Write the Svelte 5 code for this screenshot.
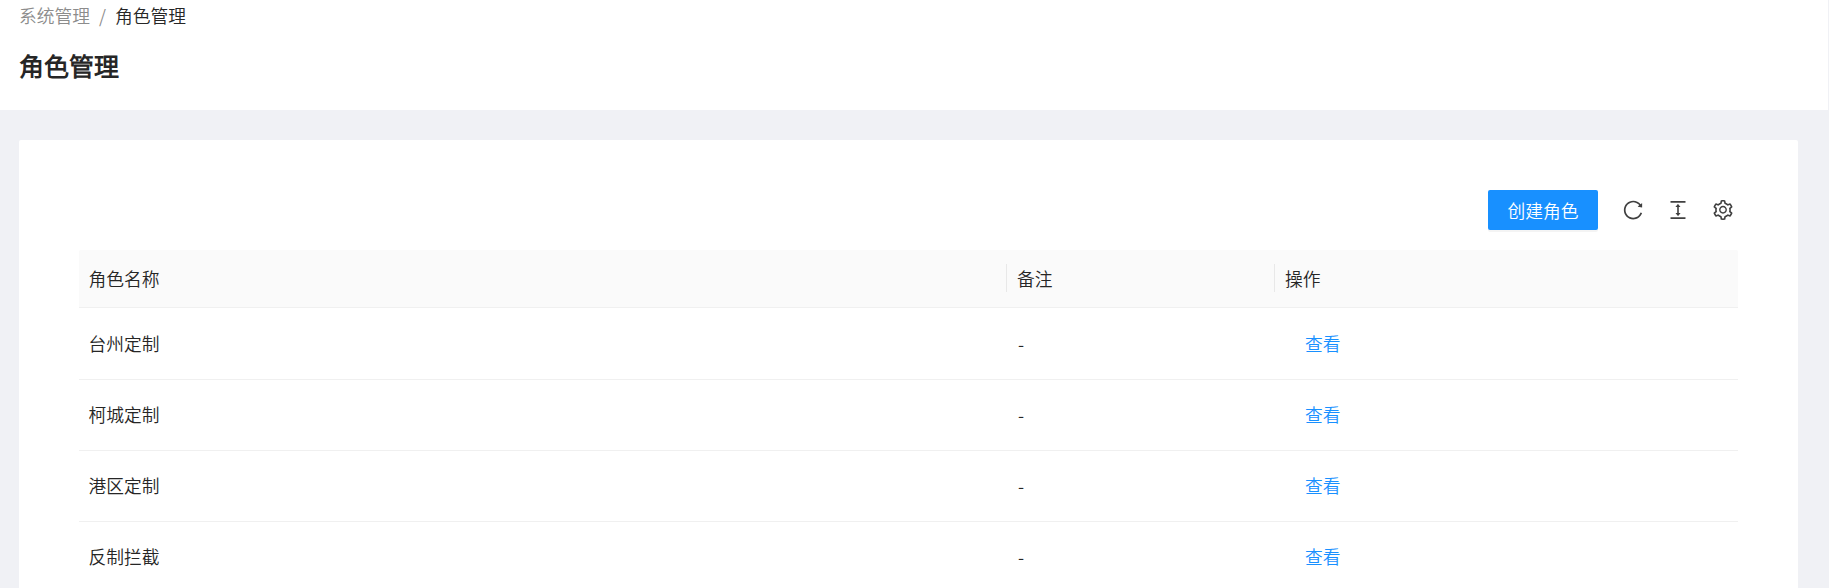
<script>
  const rows = ['台州定制', '柯城定制', '港区定制', '反制拦截'];
  const icons = [
    {
      label: '刷新',
      d: 'M909.1 209.3l-56.4 44.1C775.8 155.1 656.2 92 521.9 92 290 92 102.3 279.5 102 511.5 101.7 743.7 289.8 932 521.9 932c181.3 0 335.8-115 394.6-276.1 1.5-4.2-.7-8.9-4.9-10.3l-56.7-19.5a8 8 0 00-10.1 4.8c-1.8 5-3.8 10-5.9 14.9-17.3 41-42.1 77.8-73.7 109.4A344.77 344.77 0 01655.9 829c-42.3 17.9-87.4 27-133.8 27-46.5 0-91.5-9.1-133.8-27A341.5 341.5 0 01279 755.2a342.16 342.16 0 01-73.7-109.4c-17.9-42.4-27-87.4-27-133.9s9.1-91.5 27-133.9c17.3-41 42.1-77.8 73.7-109.4 31.6-31.6 68.4-56.4 109.3-73.8 42.3-17.9 87.4-27 133.8-27 46.5 0 91.5 9.1 133.8 27a341.5 341.5 0 01109.3 73.8c9.9 9.9 19.2 20.4 27.8 31.4l-60.2 47a8 8 0 003 14.1l175.6 43c5 1.2 9.9-2.6 9.9-7.7l.8-180.9c-.1-6.6-7.8-10.3-13-6.2z'
    },
    {
      label: '密度',
      d: 'M840 836H184c-4.4 0-8 3.6-8 8v60c0 4.4 3.6 8 8 8h656c4.4 0 8-3.6 8-8v-60c0-4.4-3.6-8-8-8zm0-724H184c-4.4 0-8 3.6-8 8v60c0 4.4 3.6 8 8 8h656c4.4 0 8-3.6 8-8v-60c0-4.4-3.6-8-8-8zM610.8 378c6 0 9.4-7 5.7-11.7L515.7 238.7a7.14 7.14 0 00-11.3 0L403.6 366.3a7.23 7.23 0 005.7 11.7H476v268h-62.8c-6 0-9.4 7-5.7 11.7l100.8 127.5c2.9 3.7 8.5 3.7 11.3 0l100.8-127.5c3.7-4.7.4-11.7-5.7-11.7H548V378h62.8z'
    },
    {
      label: '列设置',
      d: 'M924.8 625.7l-65.5-56c3.1-19 4.7-38.4 4.7-57.8s-1.6-38.8-4.7-57.8l65.5-56a32.03 32.03 0 009.3-35.2l-.9-2.6a443.74 443.74 0 00-79.7-137.9l-1.8-2.1a32.12 32.12 0 00-35.1-9.5l-81.3 28.9c-30-24.6-63.5-44-99.7-57.6l-15.7-85a32.05 32.05 0 00-25.8-25.7l-2.7-.5c-52.1-9.4-106.9-9.4-159 0l-2.7.5a32.05 32.05 0 00-25.8 25.7l-15.8 85.4a351.86 351.86 0 00-99 57.4l-81.9-29.1a32 32 0 00-35.1 9.5l-1.8 2.1a446.02 446.02 0 00-79.7 137.9l-.9 2.6c-4.5 12.5-.8 26.5 9.3 35.2l66.3 56.6c-3.1 18.8-4.6 38-4.6 57.1 0 19.2 1.5 38.4 4.6 57.1L99 625.5a32.03 32.03 0 00-9.3 35.2l.9 2.6c18.1 50.4 44.9 96.9 79.7 137.9l1.8 2.1a32.12 32.12 0 0035.1 9.5l81.9-29.1c29.8 24.5 63.1 43.9 99 57.4l15.8 85.4a32.05 32.05 0 0025.8 25.7l2.7.5a449.4 449.4 0 00159 0l2.7-.5a32.05 32.05 0 0025.8-25.7l15.7-85a350 350 0 0099.7-57.6l81.3 28.9a32 32 0 0035.1-9.5l1.8-2.1c34.8-41.1 61.6-87.5 79.7-137.9l.9-2.6c4.5-12.3.8-26.3-9.3-35zM788.3 465.9c2.5 15.1 3.8 30.6 3.8 46.1s-1.3 31-3.8 46.1l-6.6 40.1 74.7 63.9a370.03 370.03 0 01-42.6 73.6L721 702.8l-31.4 25.8c-23.9 19.6-50.5 35-79.3 45.8l-38.1 14.3-17.9 97a377.5 377.5 0 01-85 0l-17.9-97.2-37.8-14.5c-28.5-10.8-55-26.2-78.7-45.7l-31.4-25.9-93.4 33.2c-17-22.9-31.2-47.6-42.6-73.6l75.5-64.5-6.5-40c-2.4-14.9-3.7-30.3-3.7-45.5 0-15.3 1.2-30.6 3.7-45.5l6.5-40-75.5-64.5c11.3-26.1 25.6-50.7 42.6-73.6l93.4 33.2 31.4-25.9c23.7-19.5 50.2-34.9 78.7-45.7l37.9-14.3 17.9-97.2c28.1-3.2 56.8-3.2 85 0l17.9 97 38.1 14.3c28.7 10.8 55.4 26.2 79.3 45.8l31.4 25.8 92.8-32.9c17 22.9 31.2 47.6 42.6 73.6L781.8 426l6.5 39.9zM512 326c-97.2 0-176 78.8-176 176s78.8 176 176 176 176-78.8 176-176-78.8-176-176-176zm79.2 255.2A111.6 111.6 0 01512 614c-29.9 0-58-11.7-79.2-32.8A111.6 111.6 0 01400 502c0-29.9 11.7-58 32.8-79.2C454 401.6 482.1 390 512 390c29.9 0 58 11.6 79.2 32.8A111.6 111.6 0 01624 502c0 29.9-11.7 58-32.8 79.2z'
    }
  ];
</script>

<div class="page">
  <header>
    <nav><span class="parent">系统管理</span><span class="sep">/</span><span>角色管理</span></nav>
    <h1>角色管理</h1>
  </header>
  <main>
    <div class="toolbar">
      <button class="create">创建角色</button>
      {#each icons as icon}
        <button class="tool" aria-label={icon.label}>
          <svg viewBox="64 64 896 896" width="20" height="20" fill="currentColor"><path d={icon.d} /></svg>
        </button>
      {/each}
    </div>
    <div class="table">
      <div class="row head">
        <div class="cell">角色名称</div>
        <div class="cell divided">备注</div>
        <div class="cell divided">操作</div>
      </div>
      {#each rows as name}
        <div class="row body">
          <div class="cell">{name}</div>
          <div class="cell note">-</div>
          <div class="cell action"><a href="#view">查看</a></div>
        </div>
      {/each}
    </div>
  </main>
</div>

<style>
  :global(body) {
    margin: 0;
    overflow: hidden;
  }
  .page {
    box-sizing: border-box;
    height: 588px;
    overflow: hidden;
    background: #f0f1f5;
    color: #262626;
    font: 350 17.75px/28px 'Noto Sans CJK SC DemiLight', 'Noto Sans CJK SC', sans-serif;
  }
  header {
    box-sizing: border-box;
    height: 110px;
    margin-right: 1px;
    padding: 1px 19px 0;
    background: #fff;
  }
  nav {
    display: flex;
    height: 28px;
  }
  .parent,
  .sep {
    color: #8c8c8c;
  }
  .sep {
    margin: 0 9px;
  }
  h1 {
    margin: 16px 0 0;
    font-size: 25px;
    line-height: 40px;
    font-weight: 700;
  }
  main {
    box-sizing: border-box;
    height: 520px;
    margin: 30px 31px 0 19px;
    padding: 50px 60px 0;
    background: #fff;
    border-radius: 2px;
  }
  .toolbar {
    display: flex;
    align-items: center;
    justify-content: flex-end;
    gap: 25px;
    height: 40px;
    padding-right: 5px;
    margin-bottom: 20px;
  }
  button {
    border: 0;
    padding: 0;
    font: inherit;
  }
  .create {
    width: 110px;
    height: 40px;
    padding-bottom: 1px;
    border-radius: 2px;
    background: #1890ff;
    color: #fff;
    box-shadow: 0 2px 0 rgba(0, 0, 0, 0.045);
  }
  .tool {
    display: flex;
    background: none;
    color: #404040;
  }
  .row {
    box-sizing: border-box;
    display: grid;
    grid-template-columns: 927px 268px 1fr;
    align-items: center;
    padding-bottom: 2px;
    border-bottom: 1px solid #f0f0f0;
  }
  .head {
    height: 58px;
    background: #fafafa;
    border-radius: 2px 2px 0 0;
  }
  .body {
    height: 71px;
  }
  .head + .body {
    height: 72px;
  }
  .cell {
    padding-left: 9.5px;
  }
  .divided {
    padding-left: 10px;
    border-left: 1px solid #e8e8e8;
  }
  .note {
    padding-left: 12px;
  }
  .action {
    padding-left: 31px;
  }
  a {
    color: #1890ff;
    text-decoration: none;
  }
</style>
